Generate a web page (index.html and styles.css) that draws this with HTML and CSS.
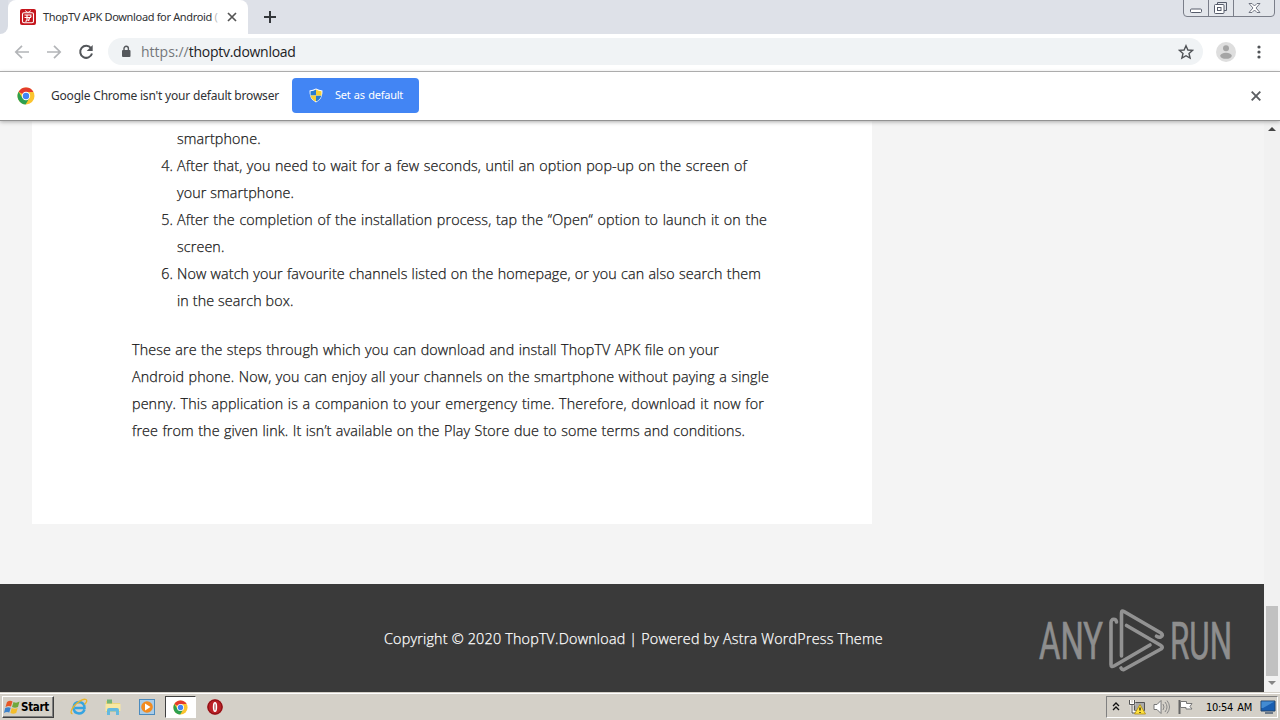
FILE: index.html
```html
<!DOCTYPE html>
<html lang="en">
<head>
<meta charset="utf-8">
<title>ThopTV APK Download for Android</title>
<link rel="stylesheet" href="styles.css">
</head>
<body>
<svg class="defs" width="0" height="0">
  <symbol id="chrome" viewBox="0 0 18 18">
    <circle cx="9" cy="9" r="8.5" fill="#fbc42f"/>
    <path d="M9 9 1.6 4.8A8.5 8.5 0 0 1 16.4 4.9H9z" fill="#e33b2e"/>
    <path d="M1.6 4.8A8.5 8.5 0 0 0 8.6 17.5L12.4 11 9 9 5.5 11z" fill="#2da04f"/>
    <circle cx="9" cy="9" r="4.2" fill="#fff"/><circle cx="9" cy="9" r="3.2" fill="#4285f4"/>
  </symbol>
</svg>
<div class="screen">
  <header class="tabstrip">
    <div class="edge"></div>
    <div class="tab">
      <svg class="favicon" viewBox="0 0 16 16"><rect width="16" height="16" rx="2" fill="#c5161d"/><path d="M5 1.500 8 3.500 11 1.500" fill="none" stroke="#fff" stroke-width=".8"/><rect x="2.500" y="3.700" width="11" height="10" rx="1.500" fill="none" stroke="#fff" stroke-width="1.100"/><path d="M4.500 6h7M4.500 8.500h6q1-1 0-2M7 6v5.500l-1.500 1M9.500 8.500 8.500 12" fill="none" stroke="#fff" stroke-width="1.200"/></svg>
      <span class="tab-title fit">ThopTV APK Download for Android <span class="fade">(</span></span>
      <svg class="tab-x" viewBox="0 0 10 10"><path d="M1 1l8 8M9 1 1 9" stroke="#555" stroke-width="1.7"/></svg>
    </div>
    <svg class="plus" viewBox="0 0 12 12"><path d="M6 0v12M0 6h12" stroke="#34373b" stroke-width="2"/></svg>
    <svg class="winctl" viewBox="0 0 94 18"><path d="M1.500 0V13Q1.500 16.500 5 16.500H89Q92.500 16.500 92.500 13V0M26.500 0V16.500M51.500 0V16.500" fill="#e3e6eb" stroke="#7a7e89"/><rect x="8.500" y="9" width="11" height="3.500" rx="1" fill="#fff" stroke="#565c6b"/><path d="M35.500 5V2.500h9v8H42" fill="none" stroke="#565c6b"/><rect x="32.500" y="4.500" width="9.500" height="9" rx="1" fill="#fff" stroke="#565c6b"/><rect x="35.500" y="7.500" width="3.500" height="3" fill="none" stroke="#565c6b"/><path d="M67 3.500h3l2.500 2.500 2.500-2.500h3l-4 4.500 4 4.500h-3l-2.500-2.500-2.500 2.500h-3l4-4.500z" fill="#fff" stroke="#646977" stroke-width=".9"/></svg>
  </header>
  <nav class="toolbar">
    <svg class="arrow" viewBox="0 0 16 16"><path d="M15 8H2M8 1.800 1.800 8 8 14.200" fill="none" stroke="#b3b5b8" stroke-width="1.700"/></svg>
    <svg class="arrow" viewBox="0 0 16 16"><path d="M1 8h13M8 1.800 14.200 8 8 14.200" fill="none" stroke="#b3b5b8" stroke-width="1.700"/></svg>
    <svg class="arrow" viewBox="0 0 16 16"><path d="M13 4.200A6 6 0 1 0 14 9.500" fill="none" stroke="#53565a" stroke-width="2"/><path d="M14.700 1v6H8.700z" fill="#53565a"/></svg>
    <div class="omnibox">
      <svg class="lock" viewBox="0 0 10 13"><rect x="1" y="5" width="8.500" height="7" rx="1" fill="#55585c"/><path d="M3 5V3.500a2.200 2.200 0 0 1 4.400 0V5" fill="none" stroke="#55585c" stroke-width="1.400"/></svg>
      <span class="url fit"><span class="scheme">https://</span>thoptv.download</span>
      <svg class="star" viewBox="0 0 16 16"><path d="M8 1.700 9.900 6l4.600.4L11 9.500l1.100 4.600L8 11.700l-4.100 2.400L5 9.500 1.500 6.400 6.100 6z" fill="none" stroke="#505357" stroke-width="1.400"/></svg>
    </div>
    <svg class="avatar" viewBox="0 0 20 20"><circle cx="10" cy="10" r="10" fill="#dedede"/><circle cx="10" cy="6.300" r="3" fill="#a5a5a5"/><ellipse cx="10" cy="13.800" rx="5.800" ry="3" fill="#a5a5a5"/></svg>
    <svg class="dots" viewBox="0 0 4 14"><g fill="#505357"><circle cx="2" cy="2" r="1.600"/><circle cx="2" cy="7" r="1.600"/><circle cx="2" cy="12" r="1.600"/></g></svg>
  </nav>
  <section class="infobar">
    <svg class="chrome-logo"><use href="#chrome"/></svg>
    <span class="info-text fit">Google Chrome isn't your default browser</span>
    <button class="default-btn">
      <svg class="shield" viewBox="0 0 14 15"><path d="M7 .5Q10 2 13.500 2.500 14 11 7 14.500 0 11 .5 2.500 4 2 7 .5z" fill="#fff"/><path d="M7 1.500V7.500H1.500V3.200Q4.500 3 7 1.500zM7 7.500h5.300Q11.500 11.500 7 13.500z" fill="#297bd0"/><path d="M7 1.500Q9.500 3 12.500 3.200V7.500H7zM1.500 7.500H7v6Q2.300 11.500 1.500 7.500z" fill="#f6cf36"/></svg>
      <span class="btn-text fit">Set as default</span>
    </button>
    <svg class="info-x" viewBox="0 0 10 10"><path d="M.7.7l8.600 8.600M9.300.7.7 9.300" stroke="#5b5e62" stroke-width="1.900"/></svg>
  </section>
  <div class="viewport">
    <main class="page">
      <article class="article">
        <div class="list">
          <i></i><p class="line" style="width:82px">smartphone.</p>
          <i>4.</i><p class="line" style="width:570px">After that, you need to wait for a few seconds, until an option pop-up on the screen of</p>
          <i></i><p class="line" style="width:115px">your smartphone.</p>
          <i>5.</i><p class="line" style="width:590px">After the completion of the installation process, tap the “Open“ option to launch it on the</p>
          <i></i><p class="line" style="width:45px">screen.</p>
          <i>6.</i><p class="line" style="width:584px">Now watch your favourite channels listed on the homepage, or you can also search them</p>
          <i></i><p class="line" style="width:115px">in the search box.</p>
        </div>
        <div class="closing">
          <p class="line" style="width:587px">These are the steps through which you can download and install ThopTV APK file on your</p>
          <p class="line" style="width:637px">Android phone. Now, you can enjoy all your channels on the smartphone without paying a single</p>
          <p class="line" style="width:632px">penny. This application is a companion to your emergency time. Therefore, download it now for</p>
          <p class="line" style="width:613px">free from the given link. It isn’t available on the Play Store due to some terms and conditions.</p>
        </div>
      </article>
      <footer class="footer">
        <p class="line copyright" style="width:496px">Copyright © 2020 ThopTV.Download | Powered by Astra WordPress Theme</p>
        <svg class="anyrun" viewBox="0 0 200 66">
          <g font-family="Roboto" font-size="52" fill="#8e8e8e" stroke="#8e8e8e" stroke-width=".7"><text x="2" y="51" textLength="64" lengthAdjust="spacingAndGlyphs">ANY</text><text x="133" y="51" textLength="62" lengthAdjust="spacingAndGlyphs">RUN</text></g>
          <g transform="translate(1 -9)" fill="none" stroke="#929292" stroke-width="3.600" stroke-linejoin="round" stroke-linecap="round"><path d="M78.500 23q-.500-3.500-4-2.500-1.500 1-1.500 3v42q0 3 3 1.500L112 46"/><path d="M83.500 57V14q0-3 2.500-1.500l37 21.500q3 2.500-.500 4-1.500.700-4-.800"/><path d="M88.500 26.500 123 46.500q2.500 1.500 0 3.500L86 70.500q-2 .500-3-1.500"/></g>
        </svg>
      </footer>
    </main>
    <div class="scrollbar">
      <svg class="sb-arrow" viewBox="0 0 8 4"><path d="M0 4 4 0l4 4z" fill="#454545"/></svg>
      <div class="thumb"></div>
      <svg class="sb-arrow" viewBox="0 0 8 4"><path d="M0 0h8L4 4z" fill="#858585"/></svg>
    </div>
  </div>
  <div class="taskbar">
    <div class="start">
      <svg viewBox="0 0 17 16"><path d="M3 3q3-2 5.500-.500L7 7.500Q4.500 6.500 1.500 8z" fill="#e75726"/><path d="M9.500 3q3 1.500 6-.500L14 8q-3 1.500-6 0z" fill="#70a83b"/><path d="M1.200 9Q4 7.500 6.700 8.700L5.300 13.500Q2.500 12.500 0 14z" fill="#3c82cc"/><path d="M7.700 9q3 1.500 6 0l-1.500 5q-3 1.500-5.800 0z" fill="#f4bd2b"/></svg>
      <b>Start</b>
    </div>
    <div class="apps">
      <svg viewBox="0 0 18 18"><path d="M14.500 11.500Q13 15.500 9 15.500 3.500 15 3.500 9.500 4 4 9.200 4q5.500.500 5.300 6H5" fill="none" stroke="#35a4e1" stroke-width="2.500"/><path d="M2.500 16Q-1 15 4 8 12 0 16 1.500q2 1.500-1.500 5" fill="none" stroke="#eab52b" stroke-width="1.300"/></svg>
      <svg viewBox="0 0 18 18"><path d="M2 3h6l1 2h7v9H2z" fill="#ecd57b"/><path d="M3 1.500h5v4H3z" fill="#75b477"/><path d="M1.500 6h15v7h-15z" fill="#f8e8a2"/><path d="M3 17v-5q0-2 2-2h8q2 0 2 2v5h-3v-3.500H6V17z" fill="#64b9df"/></svg>
      <svg viewBox="0 0 18 18"><rect x="1.500" y="1.500" width="15" height="15" fill="#a9cce8" stroke="#4b8bbe"/><circle cx="9" cy="9" r="5.800" fill="#f28b20"/><path d="M7 5.500v7L12.500 9z" fill="#fff"/></svg>
      <div class="active-app"><svg viewBox="0 0 18 18"><use href="#chrome"/></svg></div>
      <svg viewBox="0 0 18 18"><circle cx="9" cy="9" r="7.800" fill="#bb1f25"/><circle cx="9" cy="9" r="7" fill="none" stroke="#811015"/><ellipse cx="9" cy="9" rx="2.200" ry="5" fill="#fff"/><ellipse cx="9" cy="9" rx=".6" ry="3.500" fill="#a54347"/></svg>
    </div>
    <div class="tray">
      <svg class="chev" viewBox="0 0 8 9"><path d="M1 4l3-3 3 3M1 8l3-3 3 3" fill="none" stroke="#111" stroke-width="1.300"/></svg>
      <svg class="net" viewBox="0 0 17 16"><path d="M5.500 3.500h10v8h-10z" fill="#aaa" stroke="#555"/><path d="M1 1v4h4V1M3 5v8h4" fill="none" stroke="#fff" stroke-width="2.500"/><path d="M.5 1v4.500H5.500V1M3 5v9h4" fill="none" stroke="#555"/><path d="M11 5.500 16.500 15h-11z" fill="#ffe13d" stroke="#ae8b10" stroke-width=".8"/><path d="M11 8.500v3M11 13v1" stroke="#111" stroke-width="1.200"/></svg>
      <svg class="vol" viewBox="0 0 17 16"><path d="M1 5.500h3l4-4v13l-4-4H1z" fill="#fff" stroke="#777"/><path d="M10 5q2 3 0 6M12 3q4 5 0 10M14 1.500q5 6.500 0 13" fill="none" stroke="#888"/></svg>
      <svg class="flag" viewBox="0 0 17 16"><path d="M2.500 1v14" stroke="#666" stroke-width="2"/><path d="M3.500 2.500h6v2h5.500l-2 3 2 2.500h-6V8.500H3.500z" fill="#fff" stroke="#777"/></svg>
      <span class="clock fit">10:54 AM</span>
      <svg class="desk" viewBox="0 0 16 14"><path d="M1 1h14v10H1z" fill="#195eb1" stroke="#24456b"/><path d="M1.500 1.500h13L3 8H1.500z" fill="#438bd2"/><path d="M5 13h8" stroke="#4b5e75" stroke-width="1.500"/></svg>
    </div>
  </div>
</div>
</body>
</html>
```
FILE: styles.css
```css
* { box-sizing: border-box; }
body { margin: 0; background: #f4f4f4; font-family: "Open Sans", sans-serif; }
p { margin: 0; }
svg { display: block; flex: none; }
.defs { position: absolute; }
.screen { width: 1280px; height: 720px; overflow: hidden; display: flex; flex-direction: column; }
.fit, .line { display: block; white-space: nowrap; text-align: justify; text-align-last: justify; flex: none; }

.tabstrip { height: 34px; flex: none; background: #dee1e8; display: flex; align-items: center; }
.edge { width: 8px; height: 34px; background: #fff; flex: none; }
.edge::before { content: ""; display: block; height: 34px; background: #d8dce4; border-bottom-right-radius: 8px; }
.tab { width: 240px; height: 34px; background: #fff; border-radius: 8px 8px 0 0; display: flex; align-items: center; padding-left: 12px; }
.favicon { width: 16px; height: 16px; }
.tab-title { width: 173px; margin-left: 7px; font: 11px/16px "Noto Sans", sans-serif; letter-spacing: -.34px; color: #303134; }
.fade { color: #bbb; }
.tab-x { width: 10px; height: 10px; margin-left: 11px; }
.plus { width: 12px; height: 12px; margin-left: 16px; }
.winctl { width: 94px; height: 18px; margin-left: auto; margin-right: 4px; align-self: flex-start; }

.toolbar { height: 38px; flex: none; background: #fff; border-bottom: 1px solid #adadad; display: flex; align-items: center; padding: 0 0 2px 14px; }
.arrow { width: 16px; height: 16px; margin-right: 16px; }
.omnibox { width: 1095px; height: 27px; margin-left: -2px; border-radius: 14px; background: #f0f3f5; display: flex; align-items: center; padding: 0 9px 0 13px; }
.lock { width: 10px; height: 13px; }
.url { margin-left: 10px; width: 153px; font: 14px "Open Sans", sans-serif; color: #202124; letter-spacing: -.27px; }
.scheme { color: #74777b; letter-spacing: 0; }
.star { width: 16px; height: 16px; margin-left: auto; }
.avatar { width: 20px; height: 20px; margin-left: 13px; }
.dots { width: 4px; height: 14px; margin-left: 21px; }

.infobar { height: 49px; flex: none; background: #fff; border-bottom: 1px solid #929292; box-shadow: 0 1px 4px #aaa; z-index: 1; display: flex; align-items: center; padding: 0 19px 0 17px; }
.chrome-logo { width: 18px; height: 18px; }
.info-text { width: 228px; margin-left: 16px; font: 12px "Noto Sans", sans-serif; letter-spacing: -.2px; color: #303134; margin-top: -2px; }
.default-btn { width: 127px; height: 35px; margin-left: 13px; padding: 0 0 0 17px; border: 0; border-radius: 4px; background: #4285f4; color: #fff; display: flex; align-items: center; margin-top: -1px; }
.shield { width: 14px; height: 15px; }
.btn-text { width: 68px; margin-left: 12px; font: 11px "Noto Sans", sans-serif; letter-spacing: -.25px; margin-top: -2px; }
.info-x { width: 10px; height: 10px; margin-left: auto; }

.viewport { height: 571px; flex: none; display: flex; }
.page { width: 1264px; background: #f4f4f4; }
.article { width: 840px; height: 403px; margin-left: 32px; padding: 4px 100px 0; background: #fff; color: #181818; }
.line, .list i { font: 300 14.3px/27px "Open Sans", sans-serif; letter-spacing: .13px; -webkit-text-stroke: .25px currentColor; }
.list { display: grid; grid-template-columns: 45px auto; justify-content: start; }
.list i { text-align: right; padding-right: 4px; }
.closing { margin-top: 22px; }
.footer { height: 108px; margin-top: 60px; background: #3a3a3a; display: flex; align-items: center; padding-left: 384px; position: relative; }
.copyright { color: #fff; letter-spacing: .22px; }
.anyrun { width: 200px; height: 66px; position: absolute; left: 1037px; top: 24px; overflow: visible; }
.scrollbar { width: 16px; background: #f1f1f1; display: flex; flex-direction: column; align-items: center; padding: 6px 0 7px; }
.sb-arrow { width: 8px; height: 4px; }
.thumb { width: 12px; height: 70px; background: #c1c1c1; margin: auto 0 5px; }

.taskbar { height: 28px; background: #d4d0c8; border-top: 1px solid #d4d0c8; box-shadow: inset 0 1px #fff; display: flex; align-items: center; padding: 1px 2px 0; font-family: "DejaVu Sans", sans-serif; }
.start { width: 52px; height: 22px; border: 1px solid; border-color: #fff #404040 #404040 #fff; box-shadow: inset -1px -1px #808080; display: flex; align-items: center; padding-left: 1px; }
.start svg { width: 17px; height: 16px; }
.start b { font: bold 11.5px "DejaVu Sans Condensed", "DejaVu Sans", sans-serif; letter-spacing: -.3px; color: #000; }
.apps { display: flex; align-items: center; margin-left: 16px; }
.apps svg { width: 18px; height: 18px; margin-right: 16px; }
.active-app { width: 31px; height: 22px; margin: 0 10px 0 -7px; background: #fff; border: 1px solid; border-color: #404040 #fff #fff #404040; display: flex; justify-content: center; align-items: center; }
.active-app svg { width: 15px; height: 15px; margin: 0; }
.tray { width: 172px; height: 22px; margin-left: auto; border: 1px solid; border-color: #808080 #fff #fff #808080; display: flex; align-items: center; padding-left: 5px; }
.chev { width: 8px; height: 9px; margin-bottom: 2px; }
.net { width: 17px; height: 16px; margin-left: 9px; }
.vol { width: 17px; height: 16px; margin-left: 7px; }
.flag { width: 17px; height: 16px; margin-left: 7px; }
.clock { width: 46px; margin-left: 12px; font: 11px "DejaVu Sans Condensed", sans-serif; letter-spacing: -.3px; color: #000; }
.desk { width: 16px; height: 14px; margin-left: 8px; }
```
